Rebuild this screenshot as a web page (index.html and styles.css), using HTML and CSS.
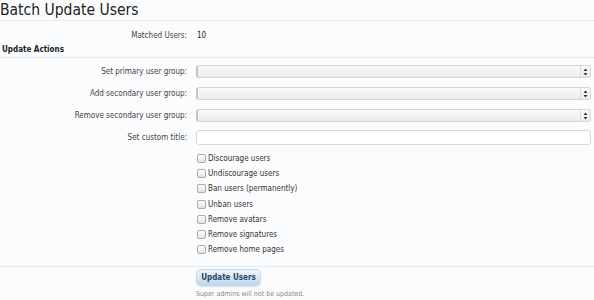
FILE: index.html
```html
<!DOCTYPE html>
<html lang="en">
<head>
  <meta charset="UTF-8">
  <title>Batch Update Users</title>
  <link rel="stylesheet" href="styles.css">
</head>
<body>
  <h1 class="title">Batch Update Users</h1>

  <form class="form">
    <dl class="row matched">
      <dt>Matched Users:</dt>
      <dd>10</dd>
    </dl>

    <h3 class="section">Update Actions</h3>

    <dl class="row">
      <dt>Set primary user group:</dt>
      <dd>
        <div class="select">
          <select></select>
          <span class="arrows"><svg width="5" height="8" viewBox="0 0 5 8"><path d="M2.5 0.5L4.5 3H0.5z M2.5 7.5L4.5 5H0.5z" fill="#333"/></svg></span>
        </div>
      </dd>
    </dl>
    <dl class="row">
      <dt>Add secondary user group:</dt>
      <dd>
        <div class="select">
          <select></select>
          <span class="arrows"><svg width="5" height="8" viewBox="0 0 5 8"><path d="M2.5 0.5L4.5 3H0.5z M2.5 7.5L4.5 5H0.5z" fill="#333"/></svg></span>
        </div>
      </dd>
    </dl>
    <dl class="row">
      <dt>Remove secondary user group:</dt>
      <dd>
        <div class="select">
          <select></select>
          <span class="arrows"><svg width="5" height="8" viewBox="0 0 5 8"><path d="M2.5 0.5L4.5 3H0.5z M2.5 7.5L4.5 5H0.5z" fill="#333"/></svg></span>
        </div>
      </dd>
    </dl>
    <dl class="row">
      <dt>Set custom title:</dt>
      <dd><input type="text" class="textbox"></dd>
    </dl>

    <dl class="row checks">
      <dt></dt>
      <dd>
        <ul>
          <li><label><span class="box"></span>Discourage users</label></li>
          <li><label><span class="box"></span>Undiscourage users</label></li>
          <li><label><span class="box"></span>Ban users (permanently)</label></li>
          <li><label><span class="box"></span>Unban users</label></li>
          <li><label><span class="box"></span>Remove avatars</label></li>
          <li><label><span class="box"></span>Remove signatures</label></li>
          <li><label><span class="box"></span>Remove home pages</label></li>
        </ul>
      </dd>
    </dl>

    <dl class="row submit">
      <dt></dt>
      <dd>
        <button type="button" class="button">Update Users</button>
        <p class="explain">Super admins will not be updated.</p>
      </dd>
    </dl>
  </form>
</body>
</html>
```
FILE: styles.css
```css
body {
  margin: 0;
  background-color: #fbfcfe;
  color: #333;
  font-family: 'DejaVu Sans Condensed', 'DejaVu Sans', sans-serif;
  font-size: 8px;
}

.title {
  margin: 0;
  height: 20px;
  font-size: 15.5px;
  font-weight: normal;
  line-height: 20px;
  color: #222;
  border-bottom: 1px solid #e6ebf1;
}

.form {
  margin: 0;
  padding: 0 3px 0 0;
}

.row {
  display: grid;
  grid-template-columns: 187px 1fr;
  column-gap: 9px;
  align-items: center;
  margin: 0;
}

.row dt {
  text-align: right;
  color: #444;
}

.row dd {
  margin: 0;
}

.matched {
  margin-top: 9px;
  line-height: 12px;
}

.matched dd {
  margin-left: 1px;
  color: #222;
}

.section {
  margin: 2px -3px 0 0;
  padding: 0 0 1px 2px;
  font-size: 8px;
  line-height: 12px;
  font-weight: bold;
  color: #222;
  border-bottom: 1px solid #e6ebf1;
}

.section + .row {
  margin-top: 7px;
}

.row + .row {
  margin-top: 9px;
}

.row + .row + .row + .row {
  margin-top: 8px;
}

.select {
  position: relative;
  height: 13px;
}

.select select {
  -webkit-appearance: none;
  appearance: none;
  display: block;
  width: 100%;
  height: 13px;
  margin: 0;
  box-sizing: border-box;
  border: 1px solid #d6d6d6;
  border-left: 2px solid #c4c4c4;
  border-radius: 3px;
  background: linear-gradient(#fafafa, #ececec);
}

.select .arrows {
  position: absolute;
  right: 1px;
  top: 1px;
  width: 9px;
  height: 11px;
  border-left: 1px solid #dcdcdc;
  display: flex;
  align-items: center;
  justify-content: center;
}

.textbox {
  display: block;
  width: 100%;
  height: 15px;
  margin: 0;
  box-sizing: border-box;
  border: 1px solid #d9d9d9;
  border-radius: 3px;
  background: #fff;
}

.checks {
  margin-top: 6px !important;
}

.checks ul {
  list-style: none;
  margin: 0;
  padding: 0 0 0 1px;
}

.checks li {
  height: 15.2px;
  display: flex;
  align-items: center;
  color: #333;
}

.checks label {
  display: flex;
  align-items: center;
}

.box {
  width: 7px;
  height: 7px;
  margin-right: 2px;
  border: 1px solid #aaa;
  border-radius: 2px;
  background: linear-gradient(#fff, #e4e4e4);
}

.submit {
  margin: 9px -3px 0 0 !important;
  padding-top: 2px;
  border-top: 1px solid #e6ebf1;
  align-items: start;
}

.button {
  display: block;
  width: 65px;
  height: 17px;
  padding: 0;
  font-family: inherit;
  font-size: 8px;
  font-weight: bold;
  color: #2b4866;
  border: 1px solid #c5d8e9;
  border-radius: 5px;
  background: linear-gradient(#f0f6fb, #bcd6ec);
  box-shadow: 0 1px 1px rgba(0, 0, 0, 0.12);
}

.explain {
  margin: 3px 0 0;
  font-size: 7px;
  line-height: 10px;
  color: #8a8a8a;
}
```
